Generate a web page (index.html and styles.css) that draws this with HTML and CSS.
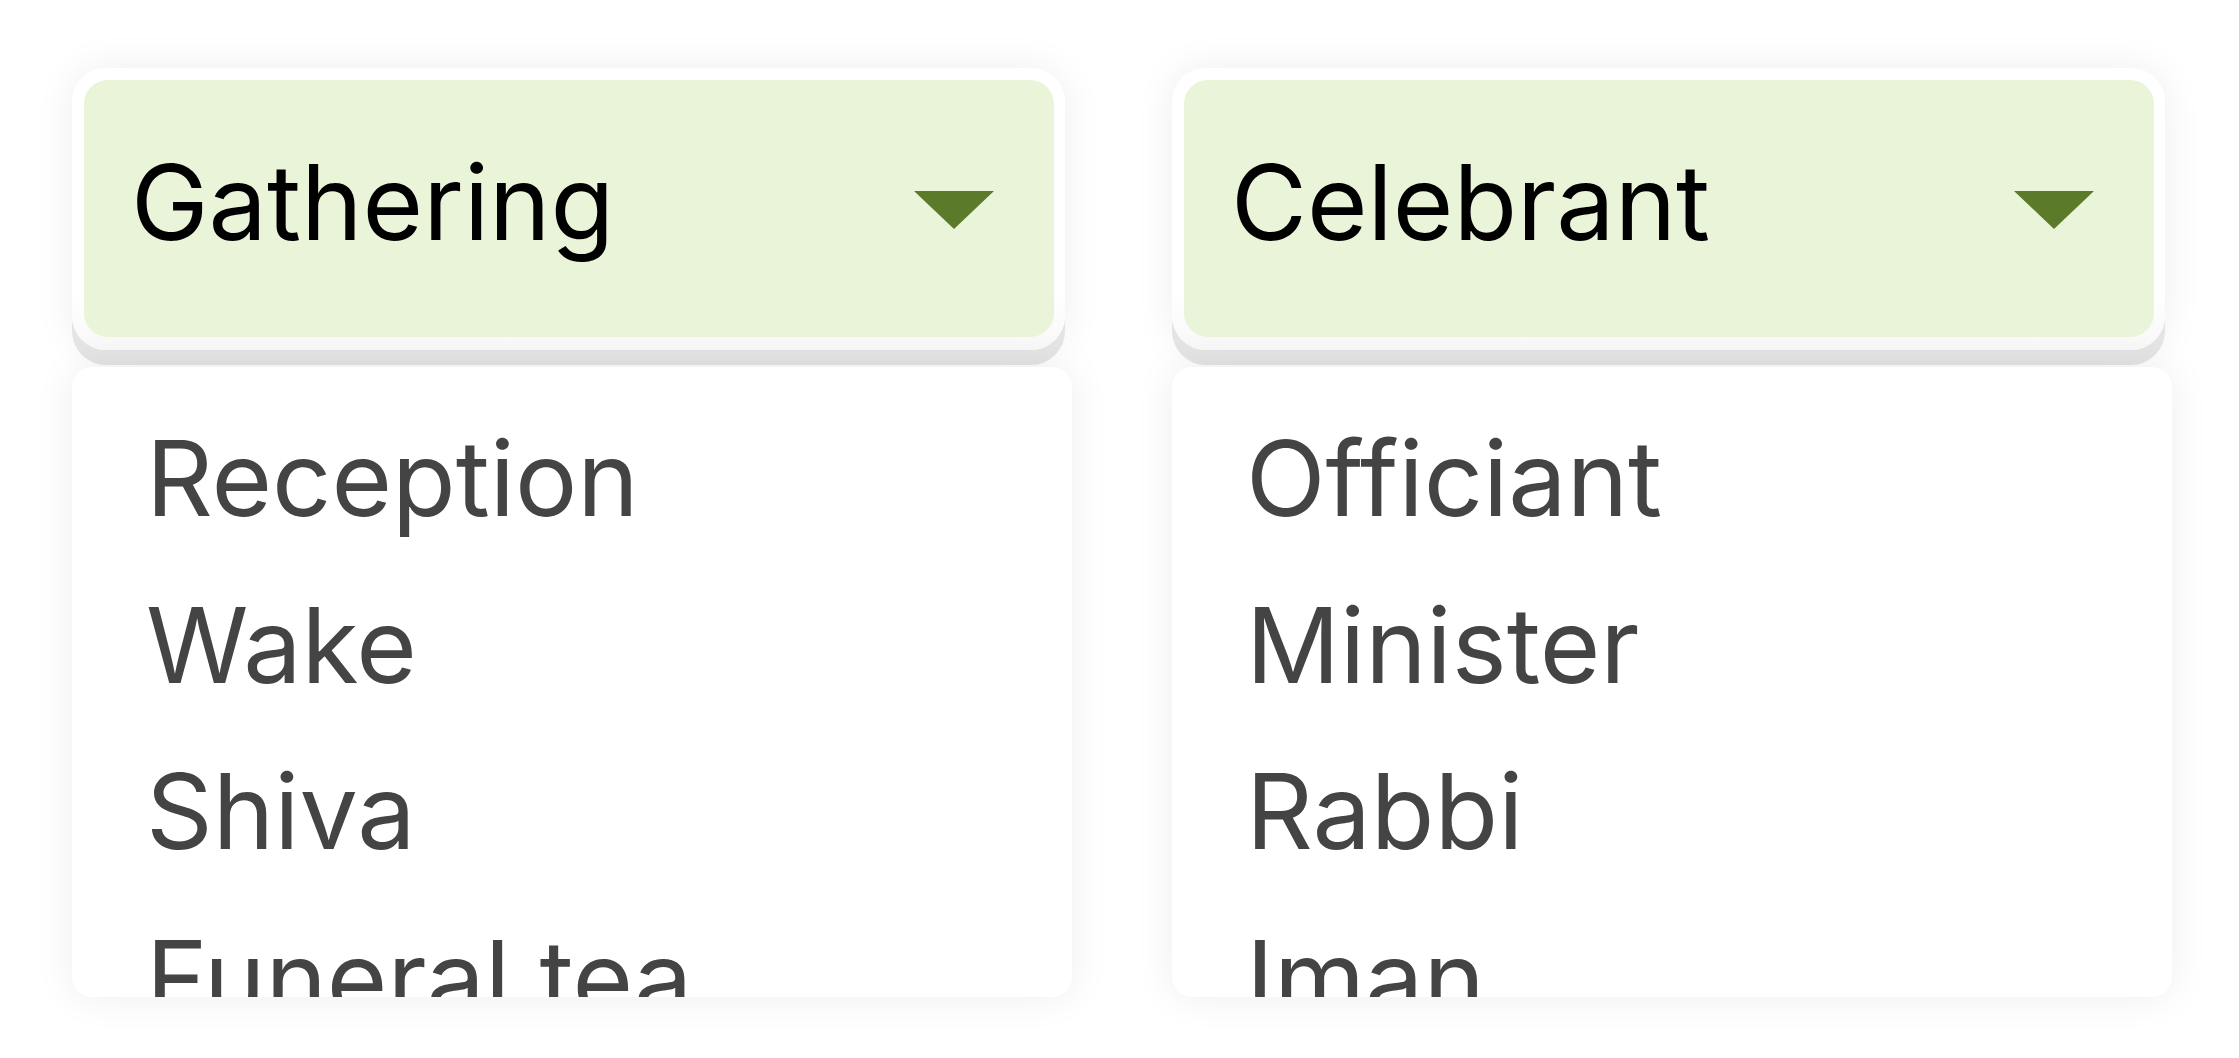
FILE: index.html
```html
<!DOCTYPE html>
<html lang="en">
<head>
    <meta charset="UTF-8">
    <meta name="viewport" content="width=device-width, initial-scale=1.0">
    <title>Service Pickers</title>
    <link rel="stylesheet" href="styles.css">
</head>
<body>
    <div class="pickers">
        <!-- Gathering dropdown -->
        <div class="picker">
            <div class="frame">
                <button class="select" type="button">
                    <span class="label">Gathering</span>
                    <span class="arrow"></span>
                </button>
            </div>
            <ul class="options">
                <li>Reception</li>
                <li>Wake</li>
                <li>Shiva</li>
                <li>Funeral tea</li>
            </ul>
        </div>

        <!-- Celebrant dropdown -->
        <div class="picker">
            <div class="frame">
                <button class="select" type="button">
                    <span class="label">Celebrant</span>
                    <span class="arrow"></span>
                </button>
            </div>
            <ul class="options">
                <li>Officiant</li>
                <li>Minister</li>
                <li>Rabbi</li>
                <li>Iman</li>
            </ul>
        </div>
    </div>
</body>
</html>
```

FILE: styles.css
```css
*{
    margin: 0;
    padding: 0;
    box-sizing: border-box;
    font-family: Inter, "Noto Sans", sans-serif;
}
body {
    background: #ffffff;
    width: 100%;
    height: 100vh;
    overflow: hidden;
}
.pickers {
    display: flex;
    gap: 100px;
    padding: 68px 0 0 72px;
}
.picker {
    width: 1000px;
    display: flex;
    flex-direction: column;
}
.frame {
    width: 993px;
    padding: 12px 11px 13px 12px;
    background: linear-gradient(#ffffff 80%, #f8f8f8);
    border-radius: 34px;
    box-shadow: 0 15px 0 #e4e4e4, 0 0 40px rgba(0, 0, 0, 0.07);
}
.select {
    width: 100%;
    height: 257px;
    display: flex;
    align-items: center;
    justify-content: space-between;
    padding: 0 60px 13px 47px;
    border: none;
    border-radius: 24px;
    background: #eaf4d9;
    cursor: pointer;
}
.label {
    font-size: 104px;
    color: #000000;
}
.arrow {
    width: 0;
    height: 0;
    margin-top: 16px;
    border-left: 40px solid transparent;
    border-right: 40px solid transparent;
    border-top: 38px solid #5b7b2b;
}
.options {
    list-style: none;
    margin-top: 17px;
    height: 630px;
    padding: 28px 0 0 74px;
    overflow: hidden;
    background: #ffffff;
    border-radius: 20px;
    box-shadow: 0 0 40px rgba(0, 0, 0, 0.07);
}
.options li {
    font-size: 104px;
    line-height: 166.5px;
    color: #444444;
}
```
